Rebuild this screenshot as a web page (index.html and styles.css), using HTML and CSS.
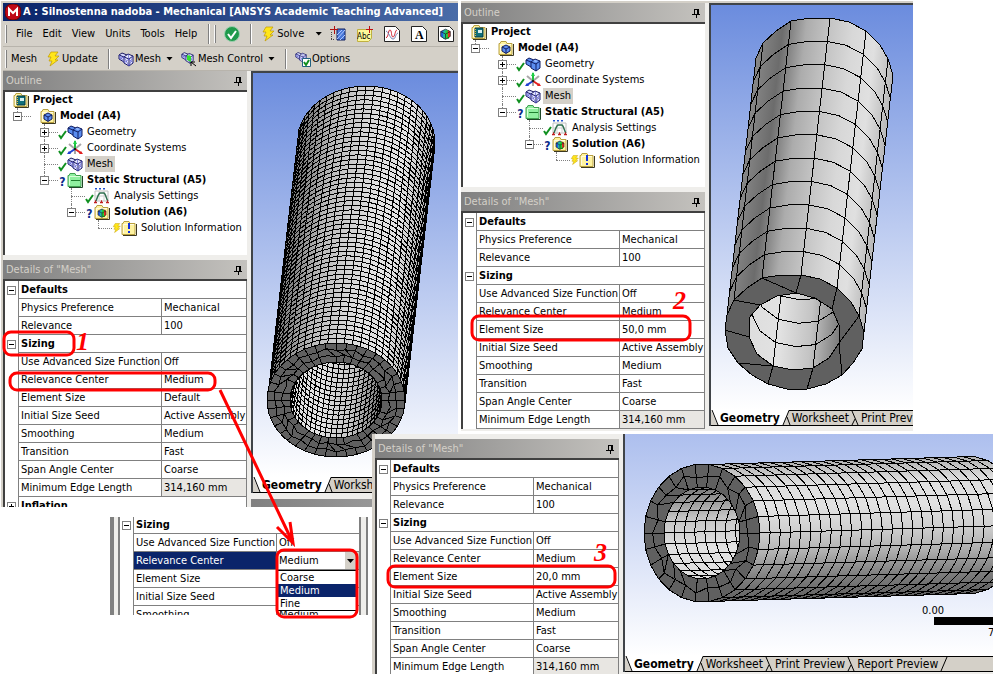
FILE: index.html
```html
<!DOCTYPE html>
<html lang="en">
<head>
    <meta charset="utf-8">
    <title>A : Silnostenna nadoba - Mechanical</title>
    <link rel="stylesheet" href="styles.css">
</head>
<body>
    <svg class="symbols" aria-hidden="true">
        <symbol id="i-folder" viewBox="0 0 16 16">
            <path d="M1 3.500h1l1-2h5l1 2h5v11H1z" fill="#fff3a0" stroke="#b8a040"/>
            <path d="M2.500 13V4.500H13" fill="none" stroke="#fffbe0"/>
            <path d="M15.500 4v11.500H2" fill="none" stroke="#3c3820"/>
        </symbol>
        <symbol id="i-project" viewBox="0 0 16 16">
            <use href="#i-folder"/>
            <path d="M4 4h8v9H4z" fill="#10707c" stroke="#063a42"/>
            <path d="M7 6h4v3H7z" fill="#d8f0f0"/>
            <path d="M4.500 5v8" stroke="#e0c040" stroke-dasharray="1 1"/>
        </symbol>
        <symbol id="i-cube" viewBox="0 0 10 10">
            <path d="M1 3l4-2 4 2v4L5 9.500 1 7z" fill="#5b8df0" stroke="#101c60"/>
            <path d="M1 3l4 2 4-2M5 5v4" fill="none" stroke="#101c60"/>
        </symbol>
        <symbol id="i-model" viewBox="0 0 16 16">
            <use href="#i-folder"/>
            <use href="#i-cube" x="3" y="4" width="10" height="10"/>
        </symbol>
        <symbol id="i-geometry" viewBox="0 0 16 16">
            <path d="M1 4l3-2 5 2v6l-3 1-5-3z" fill="#5b8df0" stroke="#101c60"/>
            <path d="M6 6l4-3 5 2v7l-4 3-5-3z" fill="#5b8df0" stroke="#101c60"/>
            <path d="M6 6l5 2 4-3M11 8v7M1 4l5 2" fill="none" stroke="#101c60"/>
            <path d="M10 4l3 1-2 1-3-1z" fill="#9cc0ff"/>
        </symbol>
        <symbol id="i-mesh" viewBox="0 0 16 16">
            <path d="M1 4l3-2 5 2v6l-3 1-5-3z" fill="#d8dcff" stroke="#181860"/>
            <path d="M6 6l4-3 5 2v7l-4 3-5-3z" fill="#e8eaff" stroke="#181860"/>
            <path d="M6 6l5 2 4-3M11 8v7M1 4l5 2" fill="none" stroke="#181860"/>
            <path d="M6 6l5 9M11 8l-5 4M11 8l4 4M15 5l-4 10M10 3l1 5M1 4l5 7M1 8l5-2" fill="none" stroke="#5858d0" stroke-width=".7"/>
        </symbol>
        <symbol id="i-axes" viewBox="0 0 16 16">
            <path d="M8 9L2 4M8 9l6-5M8 9v5" stroke="#a8a8a8" stroke-width="2"/>
            <path d="M8 9V1" stroke="#20c040" stroke-width="2"/><path d="M8 0l2 4H6z" fill="#20d048"/>
            <path d="M8 9l-6 4" stroke="#2040d0" stroke-width="2"/><path d="M0 14l2-3 2 3z" fill="#2040d0"/>
            <path d="M8 9l6 4" stroke="#e02020" stroke-width="2"/><path d="M16 14l-4 0 2-3z" fill="#e02020"/>
            <path d="M7 8h2v2H7z" fill="#202020"/>
        </symbol>
        <symbol id="i-static" viewBox="0 0 16 16">
            <path d="M1 3.500h1l1-2h5l1 2h5v11H1z" fill="#90f0a0" stroke="#40a050"/>
            <path d="M2.500 13V4.500H13" fill="none" stroke="#d8ffd8"/>
            <path d="M15.500 4v11.500H2" fill="none" stroke="#204828"/>
            <path d="M4 8.500h9" stroke="#208030"/>
        </symbol>
        <symbol id="i-analysis" viewBox="0 0 16 16">
            <path d="M1 3h13v10H1z" fill="#fff" stroke="#c0c0c0"/>
            <path d="M5 3v10M10 3v10M1 8h13" stroke="#d0d0d0"/>
            <path d="M2 13c1-2 2-7 4-8h4c2 1 2 6 4 8" fill="none" stroke="#307050" stroke-width="1.500"/>
            <path d="M1 .5h2M5 .5h2M9 .5h2M2 2v-1M6 2v-1M10 2v-1" stroke="#2050d0"/>
            <path d="M0 14.500h3M6 14.500h3M12 14.500h3M1 13h1M7 13h1M13 13h1" stroke="#c02020" stroke-width="1.500"/>
        </symbol>
        <symbol id="i-rainbow" viewBox="0 0 10 10">
            <path d="M1 3l4-2v8.500L1 7z" fill="#2060e0"/><path d="M3 2l3-1v8H3z" fill="#20b8a0"/>
            <path d="M5 2l3 0v7l-3 0z" fill="#20d030"/><path d="M7 2l2 1v4L7 8z" fill="#f03020"/>
            <path d="M1 3l4-2 4 2v4L5 9.500 1 7zM1 3l4 2 4-2M5 5v4" fill="none" stroke="#202020" stroke-width=".6"/>
        </symbol>
        <symbol id="i-solution" viewBox="0 0 16 16">
            <use href="#i-folder"/>
            <use href="#i-rainbow" x="3" y="4" width="10" height="10"/>
        </symbol>
        <symbol id="i-info" viewBox="0 0 16 16">
            <use href="#i-folder"/>
            <path d="M7 3h2v6H7zM7 11h2v2H7z" fill="#1030e0"/>
        </symbol>
        <symbol id="i-tick" viewBox="0 0 9 16">
            <path d="M1 11l2 3 5-7" fill="none" stroke="#109020" stroke-width="2"/>
        </symbol>
        <symbol id="i-bolt" viewBox="0 0 14 16">
            <path d="M5 1h7l-3 4h4l-4 4h3l-8 6 2-5H3l2-4H2z" fill="#ffe61a" stroke="#c09a00" stroke-width=".7"/>
        </symbol>
        <symbol id="i-pin" viewBox="0 0 8 10">
            <path d="M2 1h4v5M2 1v5M5 1v5M0 6.500h8M4 7v3" fill="none" stroke="#000"/>
        </symbol>
        <symbol id="i-ok" viewBox="0 0 16 16">
            <circle cx="8" cy="8" r="7.500" fill="#1f9a4c" stroke="#9ccfae"/>
            <path d="M4 8l3 4 5-7" fill="none" stroke="#fff" stroke-width="2"/>
        </symbol>
        <symbol id="i-chart" viewBox="0 0 16 16">
            <path d="M7 3h8v11H7z" fill="#4a78d8" stroke="#102060"/>
            <path d="M7 9l5-5M7 13l8-9M10 14l5-5" stroke="#b0c8ff"/>
            <path d="M1 13.500h4M1.500 6v8" stroke="#444" stroke-dasharray="1 1"/>
            <path d="M4.500 0v8M0 3.500h8" stroke="#b01010"/>
        </symbol>
        <symbol id="i-note" viewBox="0 0 16 16">
            <path d="M.5 3.500h14v9l-3 3H.5z" fill="#fdf89a" stroke="#c0b040"/>
            <path d="M12.500 0v7M9 3.500h7" stroke="#c01010"/>
        </symbol>
        <symbol id="i-page" viewBox="0 0 16 16">
            <path d="M.5.5h11l4 4v11H.5z" fill="#fff" stroke="#222"/>
        </symbol>
        <symbol id="i-wave" viewBox="0 0 16 16">
            <use href="#i-page"/>
            <path d="M2 12c3-2 2-8 4-8s1 7 3 7 2-7 4-7" fill="none" stroke="#d02030"/>
            <path d="M2 5c3 1 4 8 7 8s2-5 5-6" fill="none" stroke="#7080b0"/>
        </symbol>
        <symbol id="i-figure" viewBox="0 0 16 16">
            <use href="#i-page"/>
            <use href="#i-rainbow" x="1" y="2" width="13" height="12"/>
        </symbol>
        <symbol id="i-control" viewBox="0 0 16 16">
            <use href="#i-mesh" width="13" height="13"/>
            <path d="M6 4l4 1v6l-4-2z" fill="#30e030"/>
            <path d="M15 15l-5-4M10 15v-4h4" fill="none" stroke="#000"/>
        </symbol>
        <symbol id="i-options" viewBox="0 0 16 16">
            <use href="#i-mesh" width="12" height="12"/>
            <path d="M7.500 7.500h8v8h-8z" fill="#fff" stroke="#206080"/>
            <path d="M9 11l2 3 3-5" fill="none" stroke="#109020" stroke-width="2"/>
        </symbol>
        <symbol id="t-first" viewBox="0 0 8 16"><path d="M0 0h8v16H0z" fill="#fff"/><path d="M0 0v16h7z" fill="#d4d0c8"/><path d="M1 0l6 15M0 15.500h8" stroke="#000"/></symbol>
        <symbol id="t-active" viewBox="0 0 10 16"><path d="M0 0h8L2 16H0z" fill="#fff"/><path d="M10 .5H8L2 15M6 7l3 8M0 15.500h10" fill="none" stroke="#000"/></symbol>
        <symbol id="t-mid" viewBox="0 0 10 16"><path d="M0 .5h10M2 1l6 14M5 9l-3 6M0 15.500h10" fill="none" stroke="#000"/></symbol>
        <symbol id="t-last" viewBox="0 0 10 16"><path d="M0 .5h10M8 1L2 15M0 15.500h10" fill="none" stroke="#000"/></symbol>
    </svg>

    <!-- first step: full application window -->
    <section class="window window-main">
        <header class="titlebar">
            <svg class="logo" viewBox="0 0 16 16" aria-hidden="true">
                <rect x="0" y="0" width="16" height="16" rx="7" fill="#c00818" stroke="#600"/>
                <path d="M4 12V5l4 4 4-4v7" fill="none" stroke="#fff" stroke-width="2"/>
            </svg>
            <h1>A : Silnostenna nadoba - Mechanical [ANSYS Academic Teaching Advanced]</h1>
        </header>
        <nav class="toolbar menubar">
            <i class="grip"></i>
            <button class="menu">File</button>
            <button class="menu">Edit</button>
            <button class="menu">View</button>
            <button class="menu">Units</button>
            <button class="menu">Tools</button>
            <button class="menu">Help</button>
            <i class="sep"></i>
            <i class="grip"></i>
            <button class="tool" aria-label="Check"><svg class="icon"><use href="#i-ok"/></svg></button>
            <i class="sep"></i>
            <button class="tool solve"><svg class="icon"><use href="#i-bolt"/></svg>Solve</button>
            <button class="drop" aria-label="Solve options"></button>
            <div class="figures">
                <button class="tool" aria-label="Chart"><svg class="icon"><use href="#i-chart"/></svg></button>
                <button class="tool" aria-label="Label"><svg class="icon"><use href="#i-note"/><text class="note" x="0" y="13">Abc</text></svg></button>
                <button class="tool" aria-label="Graph"><svg class="icon"><use href="#i-wave"/></svg></button>
                <button class="tool" aria-label="Comment"><svg class="icon"><use href="#i-page"/><text class="letter" x="4" y="13">A</text></svg></button>
                <button class="tool" aria-label="Figure"><svg class="icon"><use href="#i-figure"/></svg></button>
            </div>
        </nav>
        <nav class="toolbar">
            <i class="grip"></i>
            <span class="context">Mesh</span>
            <button class="tool"><svg class="icon"><use href="#i-bolt"/></svg>Update</button>
            <i class="sep"></i>
            <button class="tool"><svg class="icon"><use href="#i-mesh"/></svg>Mesh</button>
            <button class="drop" aria-label="Mesh menu"></button>
            <button class="tool"><svg class="icon"><use href="#i-control"/></svg>Mesh Control</button>
            <button class="drop" aria-label="Mesh control menu"></button>
            <i class="sep"></i>
            <button class="tool"><svg class="icon"><use href="#i-options"/></svg>Options</button>
        </nav>
        <div class="workspace">
            <aside class="side">
                <section class="panel outline">
                    <h2>Outline<svg class="pin"><use href="#i-pin"/></svg></h2>
                    <ul class="tree">
                        <li class="root"><div class="node bold"><svg class="icon"><use href="#i-project"/></svg><span>Project</span></div>
                            <ul>
                                <li><div class="node bold"><button class="toggle" aria-label="Collapse"></button><i class="dots"></i><i class="status"></i><svg class="icon"><use href="#i-model"/></svg><span>Model (A4)</span></div>
                                    <ul>
                                        <li><div class="node"><button class="toggle plus" aria-label="Expand"></button><i class="dots"></i><svg class="status"><use href="#i-tick"/></svg><svg class="icon"><use href="#i-geometry"/></svg><span>Geometry</span></div></li>
                                        <li><div class="node"><button class="toggle plus" aria-label="Expand"></button><i class="dots"></i><svg class="status"><use href="#i-tick"/></svg><svg class="icon"><use href="#i-axes"/></svg><span>Coordinate Systems</span></div></li>
                                        <li><div class="node"><i class="dots long"></i><svg class="status"><use href="#i-tick"/></svg><svg class="icon"><use href="#i-mesh"/></svg><span class="current">Mesh</span></div></li>
                                        <li><div class="node bold"><button class="toggle" aria-label="Collapse"></button><i class="dots"></i><b class="status">?</b><svg class="icon"><use href="#i-static"/></svg><span>Static Structural (A5)</span></div>
                                            <ul>
                                                <li><div class="node"><i class="dots long"></i><svg class="status"><use href="#i-tick"/></svg><svg class="icon"><use href="#i-analysis"/></svg><span>Analysis Settings</span></div></li>
                                                <li><div class="node bold"><button class="toggle" aria-label="Collapse"></button><i class="dots"></i><b class="status">?</b><svg class="icon"><use href="#i-solution"/></svg><span>Solution (A6)</span></div>
                                                    <ul>
                                                        <li><div class="node"><i class="dots long"></i><svg class="status"><use href="#i-bolt"/></svg><svg class="icon"><use href="#i-info"/></svg><span>Solution Information</span></div></li>
                                                    </ul>
                                                </li>
                                            </ul>
                                        </li>
                                    </ul>
                                </li>
                            </ul>
                        </li>
                    </ul>
                </section>
                <section class="panel details">
                    <h2>Details of "Mesh"<svg class="pin"><use href="#i-pin"/></svg></h2>
                    <table>
                        <colgroup><col class="gutter"><col class="name"><col></colgroup>
                        <tr class="group"><td><button class="toggle" aria-label="Collapse Defaults"></button></td><th colspan="2">Defaults</th></tr>
                        <tr><td></td><th>Physics Preference</th><td>Mechanical</td></tr>
                        <tr><td></td><th>Relevance</th><td>100</td></tr>
                        <tr class="group"><td><button class="toggle" aria-label="Collapse Sizing"></button></td><th colspan="2">Sizing</th></tr>
                        <tr><td></td><th>Use Advanced Size Function</th><td>Off</td></tr>
                        <tr><td></td><th>Relevance Center</th><td>Medium</td></tr>
                        <tr><td></td><th>Element Size</th><td>Default</td></tr>
                        <tr><td></td><th>Initial Size Seed</th><td>Active Assembly</td></tr>
                        <tr><td></td><th>Smoothing</th><td>Medium</td></tr>
                        <tr><td></td><th>Transition</th><td>Fast</td></tr>
                        <tr><td></td><th>Span Angle Center</th><td>Coarse</td></tr>
                        <tr><td></td><th>Minimum Edge Length</th><td class="readonly">314,160 mm</td></tr>
                        <tr class="group"><td><button class="toggle plus" aria-label="Expand Inflation"></button></td><th colspan="2">Inflation</th></tr>
                    </table>
                </section>
            </aside>
            <main class="view">
                <svg class="scene" id="fine-mesh" role="img" aria-label="Fine mesh"></svg>
                <nav class="tabs">
                    <svg class="edge first"><use href="#t-first"/></svg><button class="active">Geometry</button><svg class="edge"><use href="#t-active"/></svg><button>Worksheet</button><svg class="edge"><use href="#t-mid"/></svg>
                </nav>
                <div class="messages"></div>
            </main>
        </div>
    </section>

    <!-- second step: element size 50 mm -->
    <section class="window window-coarse">
        <div class="workspace">
            <aside class="side">
                <section class="panel outline">
                    <h2>Outline<svg class="pin"><use href="#i-pin"/></svg></h2>
                    <ul class="tree">
                        <li class="root"><div class="node bold"><svg class="icon"><use href="#i-project"/></svg><span>Project</span></div>
                            <ul>
                                <li><div class="node bold"><button class="toggle" aria-label="Collapse"></button><i class="dots"></i><i class="status"></i><svg class="icon"><use href="#i-model"/></svg><span>Model (A4)</span></div>
                                    <ul>
                                        <li><div class="node"><button class="toggle plus" aria-label="Expand"></button><i class="dots"></i><svg class="status"><use href="#i-tick"/></svg><svg class="icon"><use href="#i-geometry"/></svg><span>Geometry</span></div></li>
                                        <li><div class="node"><button class="toggle plus" aria-label="Expand"></button><i class="dots"></i><svg class="status"><use href="#i-tick"/></svg><svg class="icon"><use href="#i-axes"/></svg><span>Coordinate Systems</span></div></li>
                                        <li><div class="node"><i class="dots long"></i><svg class="status"><use href="#i-tick"/></svg><svg class="icon"><use href="#i-mesh"/></svg><span class="current">Mesh</span></div></li>
                                        <li><div class="node bold"><button class="toggle" aria-label="Collapse"></button><i class="dots"></i><b class="status">?</b><svg class="icon"><use href="#i-static"/></svg><span>Static Structural (A5)</span></div>
                                            <ul>
                                                <li><div class="node"><i class="dots long"></i><svg class="status"><use href="#i-tick"/></svg><svg class="icon"><use href="#i-analysis"/></svg><span>Analysis Settings</span></div></li>
                                                <li><div class="node bold"><button class="toggle" aria-label="Collapse"></button><i class="dots"></i><b class="status">?</b><svg class="icon"><use href="#i-solution"/></svg><span>Solution (A6)</span></div>
                                                    <ul>
                                                        <li><div class="node"><i class="dots long"></i><svg class="status"><use href="#i-bolt"/></svg><svg class="icon"><use href="#i-info"/></svg><span>Solution Information</span></div></li>
                                                    </ul>
                                                </li>
                                            </ul>
                                        </li>
                                    </ul>
                                </li>
                            </ul>
                        </li>
                    </ul>
                </section>
                <section class="panel details">
                    <h2>Details of "Mesh"<svg class="pin"><use href="#i-pin"/></svg></h2>
                    <table>
                        <colgroup><col class="gutter"><col class="name"><col></colgroup>
                        <tr class="group"><td><button class="toggle" aria-label="Collapse Defaults"></button></td><th colspan="2">Defaults</th></tr>
                        <tr><td></td><th>Physics Preference</th><td>Mechanical</td></tr>
                        <tr><td></td><th>Relevance</th><td>100</td></tr>
                        <tr class="group"><td><button class="toggle" aria-label="Collapse Sizing"></button></td><th colspan="2">Sizing</th></tr>
                        <tr><td></td><th>Use Advanced Size Function</th><td>Off</td></tr>
                        <tr><td></td><th>Relevance Center</th><td>Medium</td></tr>
                        <tr><td></td><th>Element Size</th><td>50,0 mm</td></tr>
                        <tr><td></td><th>Initial Size Seed</th><td>Active Assembly</td></tr>
                        <tr><td></td><th>Smoothing</th><td>Medium</td></tr>
                        <tr><td></td><th>Transition</th><td>Fast</td></tr>
                        <tr><td></td><th>Span Angle Center</th><td>Coarse</td></tr>
                        <tr><td></td><th>Minimum Edge Length</th><td class="readonly">314,160 mm</td></tr>
                    </table>
                </section>
            </aside>
            <main class="view">
                <svg class="scene" id="coarse-mesh" role="img" aria-label="Coarse mesh"></svg>
                <nav class="tabs">
                    <svg class="edge first"><use href="#t-first"/></svg><button class="active">Geometry</button><svg class="edge"><use href="#t-active"/></svg><button>Worksheet</button><svg class="edge"><use href="#t-mid"/></svg><button>Print Preview</button>
                </nav>
            </main>
        </div>
    </section>

    <!-- relevance center drop-down -->
    <section class="clip">
        <i class="rail"></i>
        <div class="details">
            <table>
                <colgroup><col class="gutter"><col class="name"><col></colgroup>
                <tr class="group"><td><button class="toggle" aria-label="Collapse Sizing"></button></td><th colspan="2">Sizing</th></tr>
                <tr><td></td><th>Use Advanced Size Function</th><td>Off</td></tr>
                <tr class="selected"><td></td><th><label for="relevance">Relevance Center</label></th>
                    <td class="field">
                        <select id="relevance"><option>Coarse</option><option selected>Medium</option><option>Fine</option></select>
                        <ul class="options" role="listbox" aria-label="Relevance Center">
                            <li role="option">Coarse</li>
                            <li role="option" aria-selected="true">Medium</li>
                            <li role="option">Fine</li>
                        </ul>
                    </td></tr>
                <tr><td></td><th>Element Size</th><td></td></tr>
                <tr><td></td><th>Initial Size Seed</th><td></td></tr>
                <tr><td></td><th>Smoothing</th><td>Medium</td></tr>
            </table>
        </div>
        <i class="rail right"></i>
    </section>

    <!-- third step: element size 20 mm -->
    <section class="window window-medium">
        <div class="workspace">
            <aside class="side">
                <section class="panel details">
                    <h2>Details of "Mesh"<svg class="pin"><use href="#i-pin"/></svg></h2>
                    <table>
                        <colgroup><col class="gutter"><col class="name"><col></colgroup>
                        <tr class="group"><td><button class="toggle" aria-label="Collapse Defaults"></button></td><th colspan="2">Defaults</th></tr>
                        <tr><td></td><th>Physics Preference</th><td>Mechanical</td></tr>
                        <tr><td></td><th>Relevance</th><td>100</td></tr>
                        <tr class="group"><td><button class="toggle" aria-label="Collapse Sizing"></button></td><th colspan="2">Sizing</th></tr>
                        <tr><td></td><th>Use Advanced Size Function</th><td>Off</td></tr>
                        <tr><td></td><th>Relevance Center</th><td>Medium</td></tr>
                        <tr><td></td><th>Element Size</th><td>20,0 mm</td></tr>
                        <tr><td></td><th>Initial Size Seed</th><td>Active Assembly</td></tr>
                        <tr><td></td><th>Smoothing</th><td>Medium</td></tr>
                        <tr><td></td><th>Transition</th><td>Fast</td></tr>
                        <tr><td></td><th>Span Angle Center</th><td>Coarse</td></tr>
                        <tr><td></td><th>Minimum Edge Length</th><td class="readonly">314,160 mm</td></tr>
                    </table>
                </section>
            </aside>
            <main class="view">
                <svg class="scene" id="medium-mesh" role="img" aria-label="Medium mesh"></svg>
                <nav class="tabs">
                    <svg class="edge first"><use href="#t-first"/></svg><button class="active">Geometry</button><svg class="edge"><use href="#t-active"/></svg><button>Worksheet</button><svg class="edge"><use href="#t-mid"/></svg><button>Print Preview</button><svg class="edge"><use href="#t-mid"/></svg><button>Report Preview</button><svg class="edge"><use href="#t-last"/></svg>
                </nav>
            </main>
        </div>
    </section>

    <!-- red pen marks -->
    <svg class="marks">
        <rect x="4" y="332" width="70" height="23" rx="7"/>
        <rect x="10" y="373" width="205" height="17" rx="7"/>
        <rect x="472" y="316" width="218" height="24" rx="7"/>
        <rect x="388" y="566" width="227" height="21" rx="7"/>
        <rect x="277" y="550" width="80" height="67" rx="7"/>
        <path d="M220 390L293 543M277 527l16 16-3-21"/>
        <text x="76" y="350">1</text>
        <text x="673" y="309">2</text>
        <text x="594" y="561">3</text>
    </svg>
    <script src="script.js"></script>
</body>
</html>
```
FILE: styles.css
```css
:root {
    --face: #d4d0c8;
    --light: #efeeeb;
    --line: #808080;
    --select: #0a246a;
}

* {
    box-sizing: border-box;
}

body {
    position: relative;
    margin: 0;
    min-height: 100vh;
    overflow: hidden;
    background: #fff;
    color: #000;
    font: 11px/16px "DejaVu Sans Condensed", "DejaVu Sans", sans-serif;
}

h1, h2, ul {
    margin: 0;
    padding: 0;
    list-style: none;
}

button {
    flex: none;
    margin: 0;
    padding: 0;
    border: 0;
    background: none;
    color: inherit;
    font: inherit;
    white-space: nowrap;
}

i {
    display: block;
    flex: none;
}

svg {
    flex: none;
}

.symbols {
    position: absolute;
    width: 0;
    height: 0;
}

.icon {
    width: 16px;
    height: 16px;
}

.note {
    font-size: 8px;
}

.letter {
    font: bold 12px "Liberation Serif", serif;
}

/* windows */
.window {
    position: absolute;
    display: flex;
    flex-direction: column;
    overflow: hidden;
    background: var(--light);
}

.window-main {
    left: 1px;
    top: 1px;
    width: 457px;
    height: 506px;
    border-left: 2px solid var(--face);
    border-top: 2px solid var(--face);
}

.window-coarse {
    left: 461px;
    right: 85px;
    top: 1px;
    height: 430px;
    border-top: 2px solid var(--face);
}

.window-medium {
    left: 372px;
    right: 5px;
    top: 434px;
    height: 240px;
    border-left: 3px solid var(--face);
}

.titlebar {
    display: flex;
    align-items: center;
    gap: 2px;
    height: 18px;
    padding-left: 2px;
    background: linear-gradient(90deg, #0a246a, #4a6ca8);
    color: #fff;
}

.titlebar h1 {
    font-size: 11px;
    font-weight: bold;
    white-space: nowrap;
}

.logo {
    width: 16px;
    height: 16px;
}

/* toolbars */
.toolbar {
    display: flex;
    align-items: center;
    height: 24px;
    padding-left: 2px;
    background: var(--face);
    border-bottom: 1px solid #b8b4ac;
}

.menubar {
    height: 26px;
}

.grip {
    width: 2px;
    height: 18px;
    margin-right: 4px;
    border-right: 1px solid var(--line);
    background: #f8f8f8;
}

.menu {
    padding: 0 5px;
}

.sep {
    width: 2px;
    height: 20px;
    margin: 0 4px 0 6px;
    border-left: 1px solid var(--line);
    background: #fff;
}

.tool {
    display: flex;
    align-items: center;
    gap: 1px;
    padding: 0 4px;
}

.drop {
    width: 7px;
    height: 4px;
    margin: 0 4px 0 1px;
    background: #000;
    clip-path: polygon(0 0, 100% 0, 50% 100%);
}

.solve {
    margin-right: 6px;
}

.figures {
    display: flex;
    gap: 3px;
}

.context {
    padding-right: 4px;
}

/* docked panels */
.workspace {
    display: flex;
    flex: 1;
    min-height: 0;
}

.side {
    display: flex;
    flex-direction: column;
    flex: none;
    gap: 5px;
    width: 244px;
    margin-right: 4px;
}

.window-medium .side {
    padding-top: 5px;
}

.panel h2 {
    display: flex;
    align-items: center;
    justify-content: space-between;
    height: 19px;
    padding: 0 5px 0 3px;
    background: linear-gradient(90deg, #808080, #c4c2be);
    color: #d4d0c8;
    font-size: 11px;
    font-weight: normal;
}

.pin {
    width: 8px;
    height: 10px;
    shape-rendering: crispEdges;
}

.tree {
    height: 165px;
    padding-left: 8px;
    border: solid #404040;
    border-width: 2px 0 0 2px;
    background: #fff;
}

.tree ul ul {
    padding-left: 27px;
}

.tree li {
    position: relative;
}

.tree li::before {
    content: "";
    position: absolute;
    left: 4px;
    top: 0;
    bottom: 0;
    border-left: 1px dotted var(--line);
}

.tree li:last-child::before {
    bottom: auto;
    height: 8px;
}

.tree .root::before {
    display: none;
}

.node {
    position: relative;
    display: flex;
    align-items: center;
    height: 16px;
    white-space: nowrap;
}

.node span {
    margin-left: 2px;
    padding: 0 2px;
    line-height: 16px;
}

.node .current {
    background: var(--face);
}

.bold {
    font-weight: bold;
}

.toggle {
    display: block;
    flex: none;
    width: 9px;
    height: 9px;
    border: 1px solid var(--line);
    background: linear-gradient(#000, #000) center / 5px 1px no-repeat #fff;
}

.toggle.plus {
    background: linear-gradient(#000, #000) center / 5px 1px no-repeat, linear-gradient(#000, #000) center / 1px 5px no-repeat #fff;
}

.dots {
    width: 9px;
    border-top: 1px dotted var(--line);
}

.dots.long {
    width: 14px;
    margin-left: 4px;
}

.status {
    width: 9px;
    height: 16px;
    color: #0a2a8a;
    font-size: 12px;
    line-height: 20px;
    text-align: center;
}

/* details grid */
.details {
    overflow: hidden;
}

table {
    width: 100%;
    table-layout: fixed;
    border-collapse: separate;
    border-spacing: 0;
    background: #fff;
}

.panel table {
    border: solid #404040;
    border-width: 2px 0 0 2px;
}

.gutter {
    width: 14px;
}

.name {
    width: 143px;
}

tr {
    height: 18px;
}

th, td {
    height: 18px;
    padding: 0 0 0 2px;
    border-right: 1px solid var(--line);
    border-bottom: 1px solid var(--line);
    font-weight: normal;
    line-height: 16px;
    text-align: left;
    white-space: nowrap;
    overflow: hidden;
}

td:first-child {
    border-bottom: 0;
}

.group th {
    font-weight: bold;
}

.readonly {
    background: #e8e6e2;
}

/* graphics view */
.view {
    display: flex;
    flex-direction: column;
    flex: 1;
    min-width: 0;
    overflow: hidden;
}

.scene {
    display: block;
    flex: none;
    width: 100%;
    height: 406px;
    border: solid #404448;
    border-width: 2px 0 0 2px;
    background: linear-gradient(#6b8cde, #fff);
}

.window-coarse .scene {
    height: 407px;
}

.window-medium .scene {
    height: 222px;
    border-top-width: 0;
    background: linear-gradient(#adbfee, #fff);
}

.tabs {
    display: flex;
    flex: none;
    height: 16px;
    border-left: 2px solid #404448;
    background: var(--face);
    box-shadow: inset 0 -1px #000, inset 0 1px #000;
    font-size: 12px;
}

.tabs button {
    height: 16px;
    padding: 0 1px;
    line-height: 16px;
}

.tabs .active {
    border-bottom: 1px solid #000;
    background: #fff;
    font-weight: bold;
}

.edge {
    width: 10px;
    height: 16px;
}

.edge.first {
    width: 8px;
}

.messages {
    flex: none;
    height: 10px;
    margin-top: 6px;
    background: linear-gradient(90deg, #808080, #a8a8a8);
}

/* drop-down fragment */
.clip {
    position: absolute;
    left: 110px;
    top: 517px;
    display: flex;
    width: 258px;
    height: 98px;
    overflow: hidden;
}

.clip .details {
    flex: 1;
    min-width: 0;
}

.clip tr:first-child, .clip tr:first-child > * {
    height: 17px;
    line-height: 14px;
}

.rail {
    width: 10px;
    border: solid var(--line);
    border-width: 0 2px 0 4px;
    background: var(--light);
}

.rail.right {
    width: 8px;
    border-width: 0 2px 0 1px;
}

.selected th {
    background: var(--select);
    color: #fff;
}

.field {
    padding: 0;
}

.field select {
    display: block;
    width: 100%;
    height: 17px;
    padding: 0 0 0 2px;
    border: 0;
    border-radius: 0;
    appearance: none;
    background: linear-gradient(90deg, #fff 83%, var(--face) 83%);
    color: #000;
    font: inherit;
}

.field::after {
    content: "";
    position: absolute;
    left: 237px;
    top: 42px;
    width: 7px;
    height: 4px;
    background: #000;
    clip-path: polygon(0 0, 100% 0, 50% 100%);
}

.options {
    position: absolute;
    left: 167px;
    top: 53px;
    width: 80px;
    border: 1px solid #000;
    background: #fff;
}

.options li {
    height: 13px;
    padding-left: 2px;
    line-height: 13px;
}

.options [aria-selected] {
    background: var(--select);
    color: #fff;
}

/* pen marks over everything */
.marks {
    position: absolute;
    left: 0;
    top: 0;
    width: 100%;
    height: 100%;
    fill: none;
    stroke: #f00;
    stroke-width: 3px;
    pointer-events: none;
}

.marks text {
    fill: #f00;
    stroke: none;
    font: italic bold 26px "Liberation Serif", serif;
}
```
FILE: script.js
```js
const NS = 'http://www.w3.org/2000/svg';

function add(parent, name, attrs) {
    const el = document.createElementNS(NS, name);
    for (const key in attrs) el.setAttribute(key, attrs[key]);
    parent.appendChild(el);
    return el;
}

function path(points, close) {
    return 'M' + points.map(p => p[0].toFixed(1) + ' ' + p[1].toFixed(1)).join('L') + (close ? 'Z' : '');
}

function ellipse(cx, cy, rx, ry, n) {
    const points = [];
    for (let i = 0; i < n; i++) {
        const a = i / n * Math.PI * 2;
        points.push([cx + rx * Math.cos(a), cy + ry * Math.sin(a)]);
    }
    return points;
}

function gradient(svg, id, ends, colors) {
    const g = add(svg, 'linearGradient', { id, gradientUnits: 'userSpaceOnUse', x1: ends[0], y1: ends[1], x2: ends[2], y2: ends[3] });
    colors.forEach((c, i) => add(g, 'stop', { offset: i / (colors.length - 1), 'stop-color': c }));
}

function move(p, v, t) {
    return [p[0] + v[0] * t, p[1] + v[1] * t];
}

// points of a closed outline that lie on the far (sign 1) or near (sign -1) side of the axis
function side(points, v, sign) {
    const cx = points.reduce((s, p) => s + p[0], 0) / points.length;
    const cy = points.reduce((s, p) => s + p[1], 0) / points.length;
    const on = points.map(p => ((p[0] - cx) * v[0] + (p[1] - cy) * v[1]) * sign > -150);
    const first = on.findIndex((o, i) => o && !on[(i + points.length - 1) % points.length]);
    const result = [];
    for (let i = 0; on[(first + i) % points.length] && i < points.length; i++) {
        result.push(points[(first + i) % points.length]);
    }
    return result;
}

function wire(parent, d) {
    add(parent, 'path', { d, fill: 'none', stroke: '#000', 'shape-rendering': 'crispEdges' });
}

function drawPipe(id, o) {
    const svg = document.getElementById(id);
    gradient(svg, id + '-out', o.shade, o.colors);
    gradient(svg, id + '-in', o.innerShade, ['#dedede', '#e2e2e2', '#c4c4c4', '#777777']);
    const far = side(o.outer, o.axis, 1);
    const end = far.map(p => move(p, o.axis, 1));
    add(svg, 'path', { d: path(far.concat(end.reverse()), true), fill: `url(#${id}-out)` });

    let lines = '';
    for (let i = 1; i <= o.rings; i++) {
        lines += path(far.map(p => move(p, o.axis, i / o.rings)));
    }
    o.outerNodes.filter(p => far.includes(p)).forEach(p => {
        lines += path([p, move(p, o.axis, 1)]);
    });
    [far[0], far[far.length - 1]].forEach(p => {
        lines += path([p, move(p, o.axis, 1)]);
    });
    wire(svg, lines);

    add(svg, 'path', { d: path(o.outer, true), fill: '#606060' });
    const clip = add(svg, 'clipPath', { id: id + '-clip' });
    add(clip, 'path', { d: path(o.inner, true) });
    const hole = add(svg, 'g', { 'clip-path': `url(#${id}-clip)` });
    add(hole, 'path', { d: path(o.inner, true), fill: `url(#${id}-in)` });
    const near = side(o.inner, o.axis, -1);
    lines = '';
    for (let i = 1; i <= o.rings / 2; i++) {
        lines += path(near.map(p => move(p, o.axis, i / o.rings)));
    }
    o.innerNodes.filter(p => near.includes(p)).forEach(p => {
        lines += path([p, move(p, o.axis, 1)]);
    });
    wire(hole, lines);
    wire(svg, path(o.outer, true) + path(o.inner, true) + o.face);
}

// element edges on the cut face, in layers between both outlines
function faceMesh(outer, inner, layers, wobble) {
    const n = outer.length;
    const rows = [];
    for (let k = 0; k <= layers; k++) {
        rows.push(outer.map((p, i) => {
            const q = inner[i];
            const t = k / layers + (k > 0 && k < layers ? Math.sin(i * 2.3 + k) * wobble : 0);
            return [p[0] + (q[0] - p[0]) * t, p[1] + (q[1] - p[1]) * t];
        }));
    }
    let d = '';
    for (let k = 1; k < layers; k++) d += path(rows[k], true);
    for (let i = 0; i < n; i++) {
        const shift = Math.sin(i * 0.9) > 0.3 ? 1 : 0;
        d += path(rows.map((r, k) => r[(i + (k > 1 ? shift : 0)) % n]));
    }
    return d;
}

const fineOuter = ellipse(83, 327, 69, 57, 52);
const fineInner = ellipse(83, 327, 46, 38, 52);
const faceOuter = ellipse(83, 327, 69, 57, 40);
const faceInner = ellipse(83, 327, 46, 38, 40);
drawPipe('fine-mesh', {
    outer: fineOuter, inner: fineInner, outerNodes: fineOuter, innerNodes: fineInner,
    axis: [30, -257], rings: 56,
    shade: [18, 190, 164, 206], colors: ['#747474', '#888888', '#b8b8b8', '#d0d0d0', '#e0e0e0', '#e4e4e4', '#b4b4b4'],
    innerShade: [37, 327, 129, 333],
    face: faceMesh(faceOuter, faceInner, 3, 0.07)
});

const coarseOuter = [[14, 325], [16, 310], [23, 295], [36, 283], [51, 273], [70, 270], [90, 270], [109, 274], [126, 283], [140, 297], [148, 311],
    [153, 327], [151, 344], [142, 358], [131, 370], [115, 379], [96, 384], [76, 384], [57, 379], [41, 370], [27, 358], [17, 343]];
const coarseInner = [[38, 332], [38, 313], [49, 300], [66, 291], [85, 288], [104, 293], [121, 304], [128, 320], [128, 338], [118, 353],
    [102, 363], [82, 365], [62, 361], [46, 349]];
const coarseLinks = [[51, 273, 85, 288], [90, 270, 85, 288], [126, 283, 121, 304], [148, 311, 128, 338], [131, 370, 128, 338],
    [96, 384, 102, 363], [57, 379, 62, 361], [27, 358, 62, 361], [14, 325, 38, 332], [23, 295, 49, 300]];
drawPipe('coarse-mesh', {
    outer: coarseOuter, inner: coarseInner,
    outerNodes: coarseOuter.filter((p, i) => i % 2 === 0),
    innerNodes: [coarseInner[10], coarseInner[12]],
    axis: [29, -257], rings: 11,
    shade: [29, 190, 168, 206], colors: ['#888888', '#6c6c6c', '#acacac', '#c4c4c4', '#d8d8d8', '#e0e0e0', '#b4b4b4'],
    innerShade: [38, 327, 130, 333],
    face: coarseLinks.map(l => path([[l[0], l[1]], [l[2], l[3]]])).join('')
});

const mediumOuter = ellipse(77, 99, 58, 69, 26);
const mediumInner = ellipse(77, 99, 38, 46, 26);
drawPipe('medium-mesh', {
    outer: mediumOuter, inner: mediumInner, outerNodes: mediumOuter, innerNodes: mediumInner,
    axis: [265, -8], rings: 26,
    shade: [200, 26, 204, 164], colors: ['#b0b0b0', '#dedede', '#e2e2e2', '#d0d0d0', '#b0b0b0', '#808080', '#606060'],
    innerShade: [77, 145, 75, 53],
    face: faceMesh(mediumOuter, mediumInner, 2, 0.14)
});

// scale bar under the pipe
const scale = document.getElementById('medium-mesh');
add(scale, 'rect', { x: 309, y: 183, width: 400, height: 8 });
add(scale, 'text', { x: 297, y: 180, 'font-size': 11 }).textContent = '0.00';
add(scale, 'text', { x: 363, y: 202, 'font-size': 11 }).textContent = '75.00';
```
